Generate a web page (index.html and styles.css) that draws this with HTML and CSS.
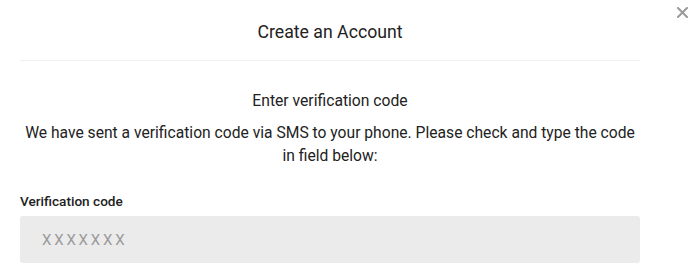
FILE: index.html
```html
<!DOCTYPE html>
<html lang="en">
<head>
<meta charset="utf-8">
<title>Create an Account</title>
<link rel="stylesheet" href="styles.css">
</head>
<body>
<div class="modal">
  <button class="close" aria-label="Close">
    <svg width="11" height="11" viewBox="0 0 11 11"><path d="M1 1L10 10M10 1L1 10" stroke="#9a9a9a" stroke-width="2" stroke-linecap="square"/></svg>
  </button>
  <div class="content">
    <h1 class="title">Create an Account</h1>
    <h2 class="subtitle">Enter verification code</h2>
    <p class="desc">We have sent a verification code via SMS to your phone. Please check and type the code in field below:</p>
    <label class="label" for="code">Verification code</label>
    <input class="input" id="code" type="text" placeholder="XXXXXXX">
  </div>
</div>
</body>
</html>
```

FILE: styles.css
```css
* { box-sizing: border-box; }
html, body { margin: 0; padding: 0; background: #fff; }
body {
  font-family: Roboto, "Liberation Sans", sans-serif;
  color: #222;
  width: 700px;
  height: 275px;
  overflow: hidden;
}
.modal {
  position: relative;
  width: 700px;
  height: 275px;
}
.close {
  position: absolute;
  top: 7px;
  right: 12px;
  width: 11px;
  height: 11px;
  padding: 0;
  border: 0;
  background: none;
  display: flex;
}
.content {
  width: 620px;
  margin-left: 20px;
  display: flex;
  flex-direction: column;
}
.title {
  margin: 0;
  height: 61px;
  padding-top: 21px;
  font-size: 17.7px;
  font-weight: 400;
  line-height: 22px;
  text-align: center;
  border-bottom: 1px solid #f1f1f1;
}
.subtitle {
  margin: 29px 0 0;
  font-size: 15.7px;
  font-weight: 400;
  line-height: 22px;
  text-align: center;
}
.desc {
  margin: 9px 0 0;
  font-size: 15.65px;
  line-height: 23px;
  text-align: center;
}
.label {
  margin-top: 25px;
  font-size: 13.6px;
  font-weight: 500;
  line-height: 18px;
}
.input {
  margin-top: 6px;
  height: 47px;
  border: 0;
  border-radius: 3px;
  background: #ebebeb;
  padding: 0 22px;
  font-family: inherit;
  font-size: 15px;
  letter-spacing: 2.8px;
  color: #333;
  outline: none;
}
.input::placeholder { color: #9a9a9a; }
```
